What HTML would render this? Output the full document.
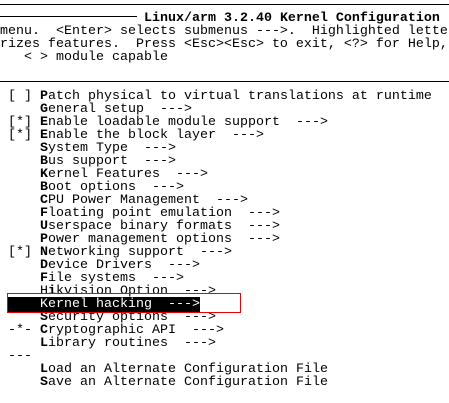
<!DOCTYPE html>
<html><head><style>
html,body{margin:0;padding:0;background:#fff;width:449px;height:403px;overflow:hidden;position:relative}
pre{position:absolute;left:0;top:11.5px;margin:0;font-family:"Liberation Mono",monospace;font-size:13.33px;line-height:13px;color:#000;white-space:pre}
b{font-weight:bold}
.hl{background:#000;color:#fff}
.r{position:absolute;height:1px;background:#000}
.box{position:absolute;left:7px;top:293px;width:232px;height:18px;border:1px solid #e00}
</style></head><body>
<div class="r" style="left:0;top:4px;width:449px"></div>
<div class="r" style="left:0;top:16px;width:137px"></div>
<div class="r" style="left:0;top:81px;width:449px"></div>
<pre>                  <b>Linux/arm 3.2.40 Kernel Configuration</b>
menu.  &lt;Enter&gt; selects submenus ---&gt;.  Highlighted lette
rizes features.  Press &lt;Esc&gt;&lt;Esc&gt; to exit, &lt;?&gt; for Help,
   &lt; &gt; module capable


 [ ] <b>P</b>atch physical to virtual translations at runtime
     <b>G</b>eneral setup  ---&gt;
 [*] <b>E</b>nable loadable module support  ---&gt;
 [*] <b>E</b>nable the block layer  ---&gt;
     <b>S</b>ystem Type  ---&gt;
     <b>B</b>us support  ---&gt;
     <b>K</b>ernel Features  ---&gt;
     <b>B</b>oot options  ---&gt;
     <b>C</b>PU Power Management  ---&gt;
     <b>F</b>loating point emulation  ---&gt;
     <b>U</b>serspace binary formats  ---&gt;
     <b>P</b>ower management options  ---&gt;
 [*] <b>N</b>etworking support  ---&gt;
     <b>D</b>evice Drivers  ---&gt;
     <b>F</b>ile systems  ---&gt;
     H<b>i</b>kvision Option  ---&gt;
 <span class="hl">    Kernel hacking  ---&gt;</span>
     <b>S</b>ecurity options  ---&gt;
 -*- <b>C</b>ryptographic API  ---&gt;
     <b>L</b>ibrary routines  ---&gt;
 ---
     <b>L</b>oad an Alternate Configuration File
     <b>S</b>ave an Alternate Configuration File
</pre>
<div class="box"></div>
</body></html>
